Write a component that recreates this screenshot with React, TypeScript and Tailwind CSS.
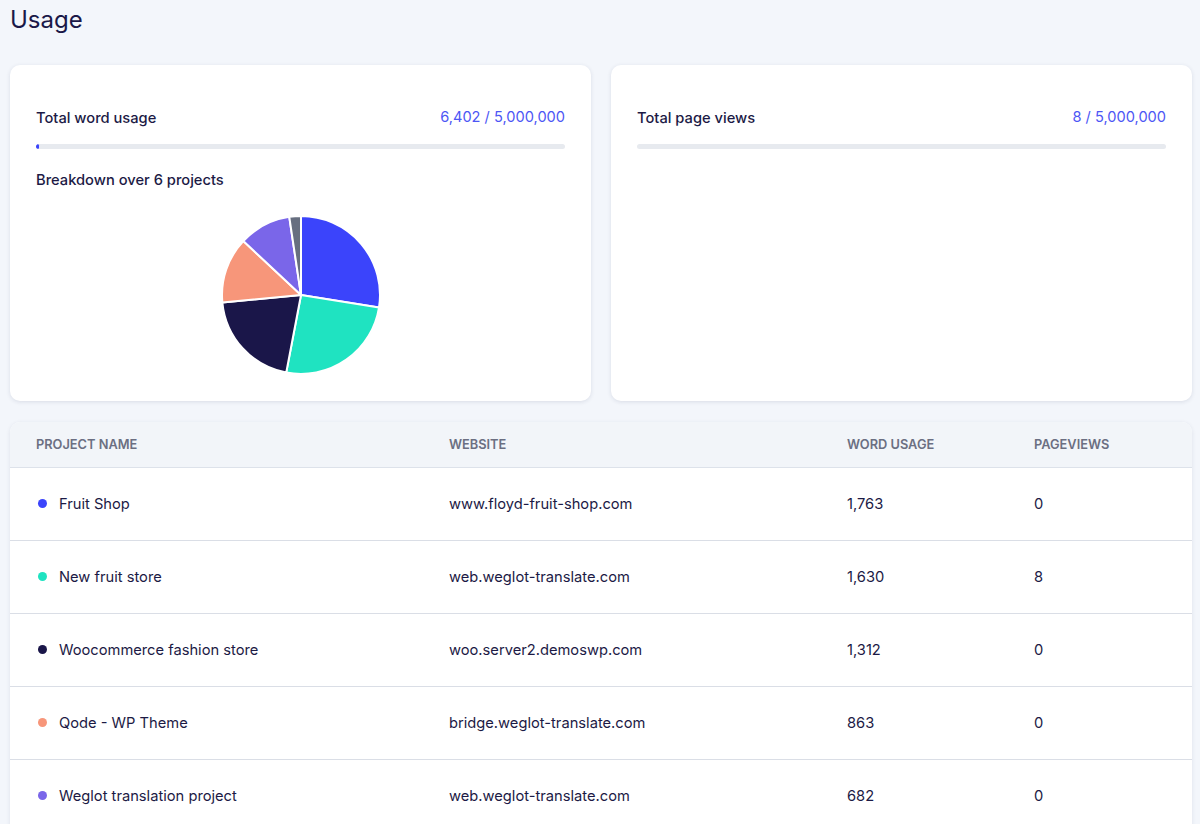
const projects = [
  { name: "Fruit Shop", site: "www.floyd-fruit-shop.com", words: 1763, views: 0, color: "#3b44fb" },
  { name: "New fruit store", site: "web.weglot-translate.com", words: 1630, views: 8, color: "#1fe3c1" },
  { name: "Woocommerce fashion store", site: "woo.server2.demoswp.com", words: 1312, views: 0, color: "#1a1649" },
  { name: "Qode - WP Theme", site: "bridge.weglot-translate.com", words: 863, views: 0, color: "#f7967a" },
  { name: "Weglot translation project", site: "web.weglot-translate.com", words: 682, views: 0, color: "#7a66e9" },
  { name: "Other", site: "", words: 152, views: 0, color: "#676f80" },
];

const TOTAL_WORDS = 6402;
const LIMIT = 5000000;

const fmt = (n: number) => n.toLocaleString("en-US");

function Pie() {
  const cx = 80;
  const cy = 80;
  const r = 79;
  let acc = 0;
  return (
    <svg width="160" height="160" viewBox="0 0 160 160">
      {projects.map((p, i) => {
        const start = (acc / TOTAL_WORDS) * Math.PI * 2;
        acc += p.words;
        const end = (acc / TOTAL_WORDS) * Math.PI * 2;
        const x1 = cx + r * Math.sin(start);
        const y1 = cy - r * Math.cos(start);
        const x2 = cx + r * Math.sin(end);
        const y2 = cy - r * Math.cos(end);
        const large = end - start > Math.PI ? 1 : 0;
        return (
          <path
            key={i}
            d={`M${cx} ${cy} L${x1} ${y1} A${r} ${r} 0 ${large} 1 ${x2} ${y2} Z`}
            fill={p.color}
            stroke="#ffffff"
            strokeWidth="2"
            strokeLinejoin="round"
          />
        );
      })}
    </svg>
  );
}

function StatCard({ label, value, pct, children }: { label: string; value: string; pct: number; children?: React.ReactNode }) {
  return (
    <div className="h-[336px] rounded-[10px] bg-white pt-[43px] px-[26px] shadow-[0_1px_4px_rgba(30,40,80,0.12)]">
      <div className="flex items-center justify-between h-5">
        <span className="text-[14.7px] font-medium text-[#1c1a45]">{label}</span>
        <span className="text-[14.6px] text-[#4d56f5]">{value}</span>
      </div>
      <div className="mt-[16px] h-[5px] rounded-full bg-[#e7eaef] overflow-hidden">
        {pct > 0 && (
          <div className="h-full rounded-full bg-[#3b44fb]" style={{ width: `max(3px, ${pct}%)` }} />
        )}
      </div>
      {children}
    </div>
  );
}

export default function App() {
  return (
    <div
      className="min-h-screen bg-[#f3f6fb] pl-[10px] pr-[8px] pb-10"
      style={{ fontFamily: "Inter, 'Noto Sans', sans-serif" }}
    >
      <h1 className="pt-[5px] text-[24px] leading-[30px] font-normal text-[#1a1848]">Usage</h1>

      <div className="mt-[30px] grid grid-cols-2 gap-5">
        <StatCard label="Total word usage" value={`${fmt(TOTAL_WORDS)} / ${fmt(LIMIT)}`} pct={(TOTAL_WORDS / LIMIT) * 100}>
          <p className="mt-[21px] text-[14.7px] leading-5 font-medium text-[#1c1a45]">Breakdown over 6 projects</p>
          <div className="mt-[25px] flex justify-center">
            <Pie />
          </div>
        </StatCard>
        <StatCard label="Total page views" value={`8 / ${fmt(LIMIT)}`} pct={0} />
      </div>

      <div className="mt-[21px] rounded-t-[10px] bg-white shadow-[0_1px_4px_rgba(30,40,80,0.10)] overflow-hidden">
        <div className="grid grid-cols-[413px_398px_187px_1fr] pl-[26px] h-[46px] items-center bg-[#f2f5f9] border-b border-[#dde2ea] text-[12.8px] font-semibold uppercase text-[#6b6f82]">
          <span>Project name</span>
          <span>Website</span>
          <span>Word usage</span>
          <span>Pageviews</span>
        </div>
        {projects.slice(0, 5).map((p) => (
          <div
            key={p.name}
            className="grid grid-cols-[413px_398px_187px_1fr] pl-[26px] h-[73px] items-center border-b border-[#dadee6] text-[14.7px] text-[#1c1a45]"
          >
            <div className="flex items-center gap-3">
              <span className="ml-[2px] h-[9px] w-[9px] rounded-full" style={{ backgroundColor: p.color }} />
              <span>{p.name}</span>
            </div>
            <span>{p.site}</span>
            <span>{fmt(p.words)}</span>
            <span>{p.views}</span>
          </div>
        ))}
      </div>
    </div>
  );
}
